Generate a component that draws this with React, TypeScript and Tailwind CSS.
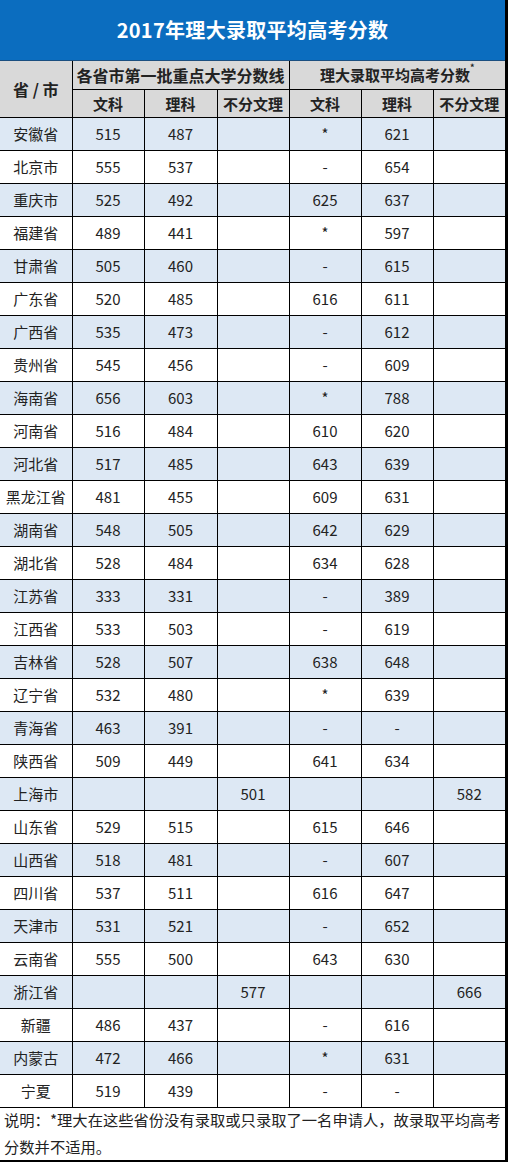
import React from 'react';

type Row = [string, string, string, string, string, string, string];

const rows: Row[] = [
  ['安徽省', '515', '487', '', '*', '621', ''],
  ['北京市', '555', '537', '', '-', '654', ''],
  ['重庆市', '525', '492', '', '625', '637', ''],
  ['福建省', '489', '441', '', '*', '597', ''],
  ['甘肃省', '505', '460', '', '-', '615', ''],
  ['广东省', '520', '485', '', '616', '611', ''],
  ['广西省', '535', '473', '', '-', '612', ''],
  ['贵州省', '545', '456', '', '-', '609', ''],
  ['海南省', '656', '603', '', '*', '788', ''],
  ['河南省', '516', '484', '', '610', '620', ''],
  ['河北省', '517', '485', '', '643', '639', ''],
  ['黑龙江省', '481', '455', '', '609', '631', ''],
  ['湖南省', '548', '505', '', '642', '629', ''],
  ['湖北省', '528', '484', '', '634', '628', ''],
  ['江苏省', '333', '331', '', '-', '389', ''],
  ['江西省', '533', '503', '', '-', '619', ''],
  ['吉林省', '528', '507', '', '638', '648', ''],
  ['辽宁省', '532', '480', '', '*', '639', ''],
  ['青海省', '463', '391', '', '-', '-', ''],
  ['陕西省', '509', '449', '', '641', '634', ''],
  ['上海市', '', '', '501', '', '', '582'],
  ['山东省', '529', '515', '', '615', '646', ''],
  ['山西省', '518', '481', '', '-', '607', ''],
  ['四川省', '537', '511', '', '616', '647', ''],
  ['天津市', '531', '521', '', '-', '652', ''],
  ['云南省', '555', '500', '', '643', '630', ''],
  ['浙江省', '', '', '577', '', '', '666'],
  ['新疆', '486', '437', '', '-', '616', ''],
  ['内蒙古', '472', '466', '', '*', '631', ''],
  ['宁夏', '519', '439', '', '-', '-', ''],
];

const font = { fontFamily: '"Noto Sans CJK SC", "Noto Sans", sans-serif' };

export default function App() {
  return (
    <div
      className="w-[508px] h-[1162px] overflow-hidden bg-white border-r-[3px] border-b-2 border-black text-[#222]"
      style={font}
    >
      <div className="h-[61px] bg-[#0b6dbf] flex items-center justify-center border-b border-[#1b4f80]">
        <h1 className="text-white text-[20px] font-bold tracking-[0.3px]">2017年理大录取平均高考分数</h1>
      </div>

      <table className="w-[505px] table-fixed border-collapse text-center text-[15px]">
        <colgroup>
          <col className="w-[72px]" />
          <col className="w-[72px]" />
          <col className="w-[73px]" />
          <col className="w-[72px]" />
          <col className="w-[72px]" />
          <col className="w-[72px]" />
          <col className="w-[72px]" />
        </colgroup>
        <thead className="bg-[#d9d9d9] font-bold">
          <tr className="h-[28px]">
            <th rowSpan={2} className="border-r border-b border-black text-[16px] font-bold">
              省 / 市
            </th>
            <th colSpan={3} className="border-r border-b border-black text-[16px] font-bold p-0 leading-none">
              各省市第一批重点大学分数线
            </th>
            <th colSpan={3} className="border-b border-black text-[15px] font-bold p-0 leading-none">
              理大录取平均高考分数<sup className="text-[9px] align-super">*</sup>
            </th>
          </tr>
          <tr className="h-[28px]">
            {['文科', '理科', '不分文理', '文科', '理科', '不分文理'].map((h, i) => (
              <th
                key={i}
                className={`border-b border-black font-bold p-0 leading-none ${i < 5 ? 'border-r' : ''}`}
              >
                {h}
              </th>
            ))}
          </tr>
        </thead>
        <tbody>
          {rows.map((r, ri) => (
            <tr key={ri} className={`h-[33px] ${ri % 2 === 0 ? 'bg-[#dde8f4]' : 'bg-white'}`}>
              {r.map((c, ci) => (
                <td
                  key={ci}
                  className={`border-b border-black p-0 leading-none ${ci < 6 ? 'border-r' : ''}`}
                >
                  {c}
                </td>
              ))}
            </tr>
          ))}
        </tbody>
      </table>

      <p className="px-[4px] -mt-[2px] text-[15.3px] leading-[27px] text-[#222]">
        说明：*理大在这些省份没有录取或只录取了一名申请人，故录取平均高考
        <br />
        分数并不适用。
      </p>
    </div>
  );
}
